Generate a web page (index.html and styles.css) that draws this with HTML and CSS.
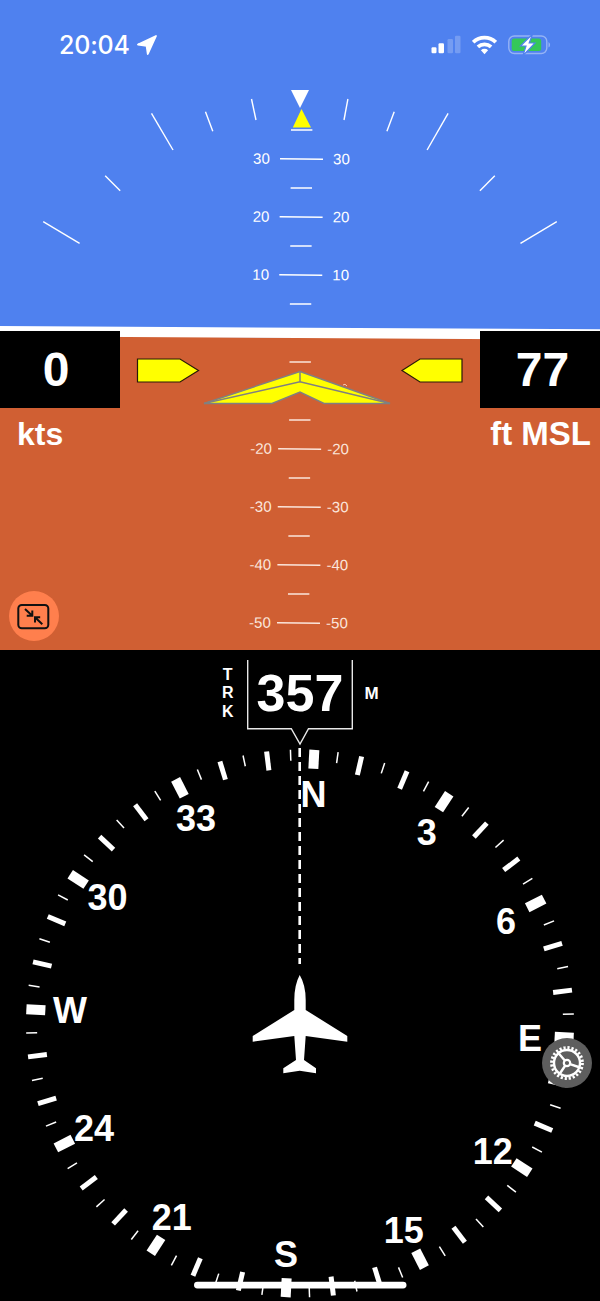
FILE: index.html
```html
<!DOCTYPE html>
<html lang="en">
<head>
  <meta charset="UTF-8">
  <meta name="viewport" content="width=device-width, initial-scale=1.0">
  <title>Flight Display</title>
  <link rel="stylesheet" href="styles.css">
</head>
<body>
  <section class="adi">
    <svg class="canvas" id="adi-canvas" width="600" height="650" viewBox="0 0 600 650">
      <rect class="sky" x="0" y="0" width="600" height="340"/>
      <polygon class="ground" points="0,336 600,339 600,650 0,650"/>
      <polygon class="horizon" points="0,326 600,329.3 600,339.7 0,336.3"/>

      <!-- roll scale -->
      <g class="roll-ticks">
        <line x1="251.5" y1="99" x2="256" y2="120"/>
        <line x1="205.5" y1="111.7" x2="212.8" y2="131.3"/>
        <line x1="151.5" y1="113.3" x2="173" y2="150"/>
        <line x1="105.2" y1="175.7" x2="120.2" y2="190.7"/>
        <line x1="43.2" y1="221.7" x2="79.6" y2="243.3"/>
        <line x1="347.9" y1="99" x2="344" y2="120"/>
        <line x1="394.2" y1="111.7" x2="386.9" y2="131.3"/>
        <line x1="448.1" y1="113.3" x2="427.1" y2="150"/>
        <line x1="494.8" y1="175.7" x2="479.9" y2="190.7"/>
        <line x1="556.8" y1="221.7" x2="520.5" y2="243.3"/>
      </g>
      <polygon class="roll-pointer" points="291,90 309,90 300,108"/>
      <polygon class="bank-pointer" points="301.5,109 311,127.5 292.8,127.5"/>

      <!-- pitch ladder goes in here -->
      <g id="ladder" transform="rotate(0.37 300 390)"></g>

      <!-- speed / altitude bugs -->
      <polygon class="bug" points="137.5,359 180,359 198.5,370.5 180,382 137.5,382"/>
      <polygon class="bug" points="462,359 420,359 402,370.5 420,382 462,382"/>

      <!-- aircraft symbol -->
      <polygon class="wing" points="300,371.5 390,403.5 324,403.5 300,392 272,403.5 204,403.5"/>
      <path class="wing-line" d="M300 371.5V381.7M204 403.5L300 381.7L390 403.5"/>
      <path class="speck" d="M343 385q2 -2 4 1"/>
    </svg>

    <div class="status-bar">
      <div class="status-left">
        <span class="clock">20:04</span>
        <svg width="20" height="20" viewBox="0 0 20 20">
          <path class="arrow-glyph" d="M19 1L1 9.5L9.6 10.8L10.8 19Z"/>
        </svg>
      </div>
      <div class="status-right">
        <svg width="30" height="19" viewBox="0 0 30 19">
          <rect class="white" x="0.5" y="12.3" width="5" height="6" rx="1.2"/>
          <rect class="white" x="7.5" y="8.3" width="5.5" height="10" rx="1.2"/>
          <rect class="dim" x="16.5" y="4" width="5.5" height="14.3" rx="1.2"/>
          <rect class="dim" x="24" y="0.7" width="5.5" height="17.6" rx="1.2"/>
        </svg>
        <svg width="25" height="20" viewBox="0 0 25 20">
          <path class="wifi-arc" d="M1.2 7.2A16.5 16.5 0 0 1 23.8 7.2"/>
          <path class="wifi-arc" d="M5.9 11.9A10 10 0 0 1 19.1 11.9"/>
          <path class="white" d="M8.9 15.3A5.2 5.2 0 0 1 16.1 15.3L12.5 19.3Z"/>
        </svg>
        <svg width="43" height="20" viewBox="0 0 43 20">
          <rect class="battery-shell" x="0.8" y="1" width="38" height="17.5" rx="5.5"/>
          <rect class="battery-level" x="3.7" y="3.4" width="29.5" height="12.7" rx="2.5"/>
          <path class="battery-cap" d="M40.5 7v5.5q1.6 -.8 1.6 -2.7t-1.6 -2.8z"/>
          <polygon class="battery-bolt" points="24.5,-.8 12.5,11 18,11 15,20.5 27,8 21.2,8"/>
        </svg>
      </div>
    </div>

    <div class="tapes">
      <div class="tape">
        <div class="tape-value speed">0</div>
        <div class="tape-unit">kts</div>
      </div>
      <div class="tape tape-right">
        <div class="tape-value alt">77</div>
        <div class="tape-unit">ft MSL</div>
      </div>
    </div>

    <button class="round-btn compact-btn" aria-label="Shrink">
      <svg width="34" height="28" viewBox="0 0 34 28">
        <rect class="icon-frame" x="1.3" y="3" width="30" height="23.3" rx="3.5"/>
        <path class="icon-arrow" d="M8 7L15.3 13.7M15.3 8.5V13.7H9.7"/>
        <path class="icon-arrow" d="M25.3 22.3L18 15.3M18 20.5V15.3H23.2"/>
      </svg>
    </button>
  </section>

  <section class="hsi">
    <svg class="canvas" id="hsi-canvas" width="600" height="651" viewBox="0 650 600 651">
      <g id="ring"></g>

      <rect class="datum-bar" x="194" y="1281.7" width="212.5" height="6.8" rx="3.4"/>
      <line class="track-line" x1="299.7" y1="748" x2="299.7" y2="964"/>

      <path class="track-box" d="M247.7 660V728.7H291.3L300 744L308.5 728.7H352.3V660"/>
      <text class="track-value" x="300" y="710.5">357</text>
      <text class="track-label" x="227.7" y="680">T</text>
      <text class="track-label" x="227.7" y="698">R</text>
      <text class="track-label" x="227.7" y="716.5">K</text>
      <text class="track-mag" x="371.5" y="699">M</text>

      <text class="card" x="313.5" y="807">N</text>
      <text class="card" x="426.7" y="845">3</text>
      <text class="card" x="506" y="934">6</text>
      <text class="card" x="530" y="1050.7">E</text>
      <text class="card" x="492.7" y="1164">12</text>
      <text class="card" x="403.7" y="1242.7">15</text>
      <text class="card" x="286" y="1267">S</text>
      <text class="card" x="171.7" y="1230">21</text>
      <text class="card" x="94" y="1141">24</text>
      <text class="card" x="70" y="1023">W</text>
      <text class="card" x="107.5" y="910">30</text>
      <text class="card" x="196" y="831">33</text>

      <path class="white" d="M299.7 975Q294.3 985 294.3 1000V1010L252.7 1036V1041.7L294.3 1036L296 1060L283.3 1068.3V1073.3L299.7 1070.7L316 1073.3V1068.3L304 1060L305.7 1036L347.3 1041.7V1036L305.7 1010V1000Q305.7 985 299.7 975Z"/>
    </svg>

    <button class="round-btn settings-btn" aria-label="Settings">
      <svg width="50" height="50" viewBox="0 0 50 50">
        <circle class="gear-teeth" cx="25" cy="25" r="15.4"/>
        <circle class="gear-ring" cx="25" cy="25" r="13"/>
        <path class="gear-spoke" d="M23 22.7L15.5 14M28 26.2L38 29.5M23.3 27.5L17.5 36"/>
        <circle class="gear-hub" cx="25" cy="25" r="3.2"/>
      </svg>
    </button>
  </section>

  <script src="script.js"></script>
</body>
</html>
```

FILE: styles.css
```css
* {
  box-sizing: border-box;
}

body {
  margin: 0;
  width: 600px;
  background-color: black;
  font-family: "Liberation Sans", Arial, sans-serif;
  overflow: hidden;
}

.canvas {
  display: block;
}

.adi {
  position: relative;
  height: 650px;
}

.hsi {
  position: relative;
  height: 651px;
}

/* attitude */
.sky {
  fill: #4f81ef;
}
.ground {
  fill: #d05f33;
}
.horizon {
  fill: white;
}
.roll-ticks line {
  stroke: white;
  stroke-width: 1.4;
}
.roll-pointer {
  fill: white;
}
.bank-pointer {
  fill: #ffff00;
}
.ladder-line {
  stroke: white;
  stroke-width: 1.5;
}
.ladder-line.on-ground {
  stroke: #fbe6dc;
}
.ladder-text {
  fill: white;
  font-size: 15px;
  text-anchor: middle;
}
.ladder-text.on-ground {
  fill: #fbe6dc;
}
.bug {
  fill: #ffff00;
  stroke: #2a1a08;
  stroke-width: 1.2;
}
.wing {
  fill: #ffff00;
  stroke: #808080;
  stroke-width: 1.5;
}
.wing-line {
  fill: none;
  stroke: #808080;
  stroke-width: 1.5;
}
.speck {
  fill: none;
  stroke: #f4cdb8;
  stroke-width: 1;
}

/* status bar */
.status-bar {
  position: absolute;
  top: 35px;
  left: 0;
  right: 0;
  display: flex;
  justify-content: space-between;
  align-items: flex-start;
  padding: 0 49px 0 59px;
}
.status-left {
  display: flex;
  align-items: center;
  gap: 7px;
}
.status-right {
  display: flex;
  align-items: flex-start;
  gap: 11px;
}
.clock {
  color: white;
  font-family: Inter, sans-serif;
  font-size: 25px;
  font-weight: 500;
  line-height: 20px;
  letter-spacing: -0.2px;
}
.white {
  fill: white;
}
.arrow-glyph {
  fill: white;
  stroke: white;
  stroke-width: 1.8;
  stroke-linejoin: round;
}
.dim {
  fill: rgba(255, 255, 255, 0.22);
}
.wifi-arc {
  fill: none;
  stroke: white;
  stroke-width: 3.8;
}
.battery-shell {
  fill: none;
  stroke: rgba(255, 255, 255, 0.4);
  stroke-width: 1.4;
}
.battery-level {
  fill: #34c759;
}
.battery-cap {
  fill: rgba(255, 255, 255, 0.4);
}
.battery-bolt {
  fill: white;
  stroke: #4f81ef;
  stroke-width: 1.2;
}

/* speed and altitude */
.tapes {
  position: absolute;
  top: 331px;
  left: 0;
  right: 0;
  display: flex;
  justify-content: space-between;
  color: white;
  font-weight: bold;
}
.tape {
  width: 120px;
}
.tape-value {
  height: 77px;
  background-color: black;
  font-size: 48px;
  line-height: 78px;
  text-align: center;
}
.tape-value.speed {
  padding-right: 8px;
}
.tape-value.alt {
  padding-left: 5px;
}
.tape-unit {
  margin-top: 8px;
  padding-left: 17px;
  font-size: 32px;
  line-height: 36px;
  white-space: nowrap;
}
.tape-right .tape-unit {
  padding: 0 9px 0 0;
  font-size: 33px;
  text-align: right;
}

/* buttons */
.round-btn {
  position: absolute;
  width: 50px;
  height: 50px;
  padding: 0;
  border: none;
  border-radius: 50%;
  display: flex;
  align-items: center;
  justify-content: center;
}
.compact-btn {
  left: 9px;
  top: 591px;
  background-color: #ff7f4d;
}
.settings-btn {
  left: 541.7px;
  top: 388px;
  background-color: #5e5e5e;
}
.icon-frame {
  fill: none;
  stroke: #111;
  stroke-width: 2;
}
.icon-arrow {
  fill: none;
  stroke: #111;
  stroke-width: 2;
}
.gear-teeth {
  fill: none;
  stroke: white;
  stroke-width: 3;
  stroke-dasharray: 2.2 1.83;
}
.gear-ring {
  fill: none;
  stroke: white;
  stroke-width: 2.4;
}
.gear-spoke {
  fill: none;
  stroke: white;
  stroke-width: 2.4;
}
.gear-hub {
  fill: #5e5e5e;
  stroke: white;
  stroke-width: 2.2;
}

/* compass */
.tick-major {
  stroke: white;
  stroke-width: 10;
}
.tick-mid {
  stroke: white;
  stroke-width: 5;
}
.tick-minor {
  stroke: white;
  stroke-width: 1.5;
}
.datum-bar {
  fill: white;
}
.track-line {
  stroke: white;
  stroke-width: 2.6;
  stroke-dasharray: 9 5;
}
.track-box {
  fill: none;
  stroke: #e8e8e8;
  stroke-width: 1.4;
}
.track-value {
  fill: white;
  font-size: 52px;
  font-weight: bold;
  text-anchor: middle;
}
.track-label {
  fill: white;
  font-size: 16px;
  font-weight: bold;
  text-anchor: middle;
}
.track-mag {
  fill: white;
  font-size: 17px;
  font-weight: bold;
  text-anchor: middle;
}
.card {
  fill: white;
  font-size: 36px;
  font-weight: bold;
  text-anchor: middle;
}
```

FILE: script.js
```js
const SVG_NS = "http://www.w3.org/2000/svg";

function addEl(parent, tag, attrs, text) {
  const el = document.createElementNS(SVG_NS, tag);
  for (const key in attrs) {
    el.setAttribute(key, attrs[key]);
  }
  if (text) el.textContent = text;
  parent.appendChild(el);
}

// pitch ladder, 5.8px per degree, 0 deg sits at y=333
const ladder = document.getElementById("ladder");
const pitches = [35, 30, 25, 20, 15, 10, 5, -5, -15, -20, -25, -30, -35, -40, -45, -50];

pitches.forEach(p => {
  const y = 333 - p * 5.8;
  const cls = p < 0 ? " on-ground" : "";
  const half = p % 10 === 0 ? 21.5 : 10.7;
  addEl(ladder, "line", { class: "ladder-line" + cls, x1: 300 - half, y1: y, x2: 300 + half, y2: y });

  if (p % 10 === 0) {
    const off = p < 0 ? 38.5 : 40;
    addEl(ladder, "text", { class: "ladder-text" + cls, x: 300 - off, y: y + 5 }, String(p));
    addEl(ladder, "text", { class: "ladder-text" + cls, x: 300 + off, y: y + 5 }, String(p));
  }
});

// compass ring, rotated for a 357 track
const ring = document.getElementById("ring");
const cx = 300;
const cy = 1023.5;

for (let deg = 0; deg < 360; deg += 5) {
  let cls = "tick-minor";
  let inner = 263;
  if (deg % 30 === 0) {
    cls = "tick-major";
    inner = 255;
  } else if (deg % 10 === 0) {
    cls = "tick-mid";
    inner = 255;
  }
  addEl(ring, "line", {
    class: cls,
    x1: cx,
    y1: cy - 274,
    x2: cx,
    y2: cy - inner,
    transform: `rotate(${deg + 3} ${cx} ${cy})`
  });
}
```
